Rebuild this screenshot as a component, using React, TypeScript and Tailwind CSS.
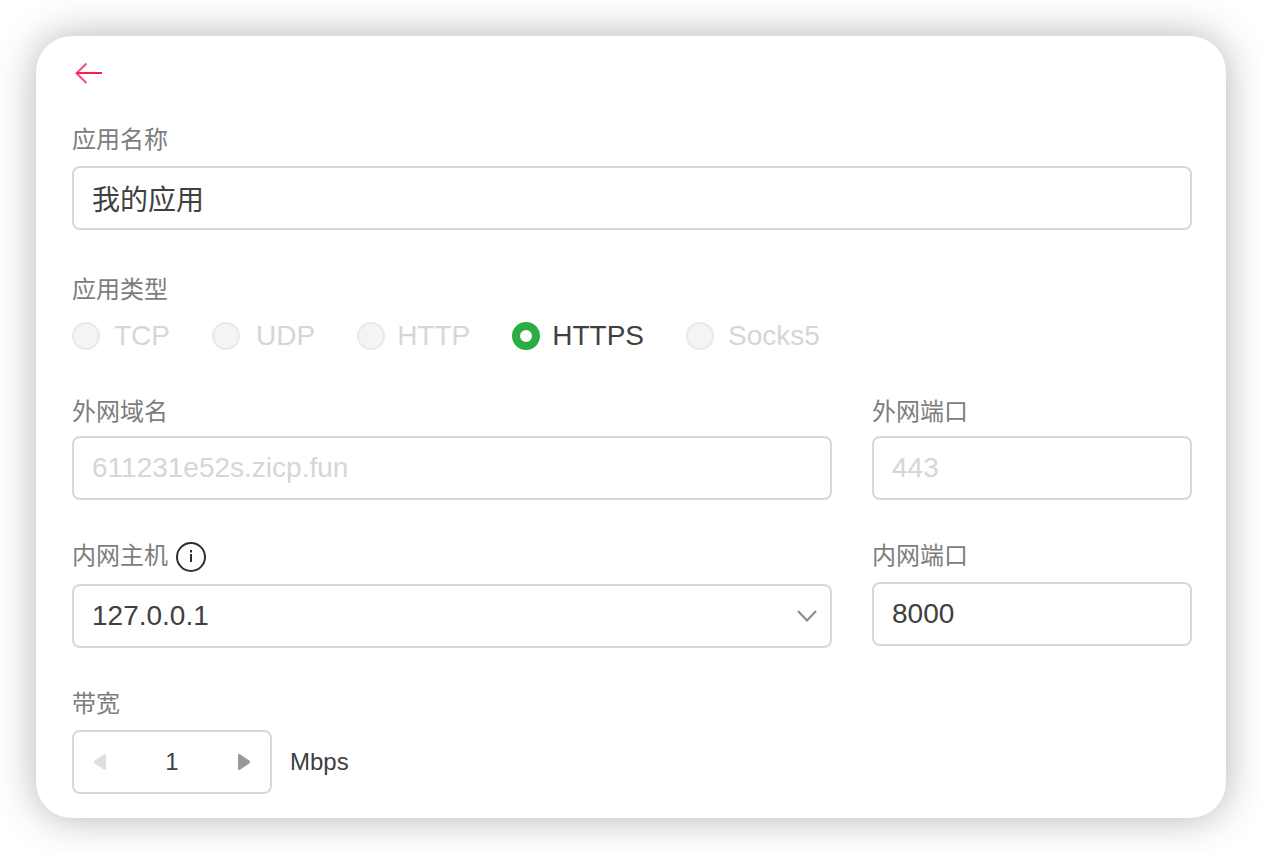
import React, { useState } from "react";
import clsx from "clsx";

const appTypes = [
  { name: "TCP", gap: "gap-3.5" },
  { name: "UDP", gap: "gap-4" },
  { name: "HTTP", gap: "gap-3" },
  { name: "HTTPS", gap: "gap-3" },
  { name: "Socks5", gap: "gap-3.5" },
];

const boxClass = "h-16 w-full rounded-lg border-2 border-[#d8d8d8] bg-white";
const inputClass = clsx(
  boxClass,
  "px-[18px] text-[28px] text-[#404040] outline-none disabled:text-[#d6d6d6]"
);
const labelClass = "block text-2xl/8 text-[#7d7d7d]";

interface FieldProps {
  id: string;
  label: string;
  value: string;
  disabled?: boolean;
  className?: string;
}

const Field = ({ id, label, value, disabled, className }: FieldProps) => {
  return (
    <div className={clsx("flex flex-col", className)}>
      <label htmlFor={id} className={labelClass}>
        {label}
      </label>
      <input
        id={id}
        type="text"
        defaultValue={value}
        disabled={disabled}
        className={inputClass}
      />
    </div>
  );
};

const BackIcon = () => (
  <svg viewBox="0 0 32 32" className="size-8" fill="none" strokeWidth="2">
    <path d="M14.5 6.5 L4.5 16.2 L14.5 26" stroke="#fb4a7c" />
    <path d="M5 16 H30" stroke="#fa1f47" />
  </svg>
);

const InfoIcon = () => (
  <svg viewBox="0 0 30 30" className="size-[30px]" fill="none">
    <circle cx="15" cy="15" r="14" stroke="#2e2e2e" strokeWidth="2" />
    <path d="M14 8h2v2.5h-2z M14 12h2v8h-2z" fill="#2e2e2e" />
  </svg>
);

const Triangle = ({ className }: { className?: string }) => (
  <svg viewBox="0 0 12 16" className={clsx("h-4 w-3", className)}>
    <path
      d="M0 1.6 C0 0 1 -0.3 2.4 0.5 L11.2 6.6 C12.3 7.4 12.3 8.6 11.2 9.4 L2.4 15.5 C1 16.3 0 16 0 14.4 Z"
      fill="currentColor"
    />
  </svg>
);

export default function App() {
  const [type, setType] = useState("HTTPS");
  const [bandwidth, setBandwidth] = useState(1);

  return (
    <main className="bg-white p-9 font-['Liberation_Sans','Noto_Sans_CJK_SC',sans-serif]">
      <form className="rounded-[36px] bg-white pt-[21px] pr-[34px] pb-6 pl-9 shadow-[0_0_40px_rgba(0,0,0,0.3)]">
        <button type="button" aria-label="返回" className="block">
          <BackIcon />
        </button>

        <Field
          id="app-name"
          label="应用名称"
          value="我的应用"
          className="mt-[35px] gap-2.5"
        />

        <fieldset className="mt-11">
          <legend className={labelClass}>应用类型</legend>
          <div className="mt-2.5 flex h-10 items-center gap-[42px]">
            {appTypes.map(({ name, gap }) => (
              <label
                key={name}
                className={clsx(
                  "flex items-center text-[28px]/10",
                  gap,
                  type === name ? "text-[#404040]" : "text-[#d6d6d6]"
                )}
              >
                <input
                  type="radio"
                  name="app-type"
                  value={name}
                  checked={type === name}
                  disabled={type !== name}
                  onChange={() => setType(name)}
                  className="size-7 appearance-none rounded-full border-2 border-[#e9e9e9] bg-[#f4f4f4] checked:border-8 checked:border-[#2dac40] checked:bg-white"
                />
                {name}
              </label>
            ))}
          </div>
        </fieldset>

        <div className="mt-10 grid grid-cols-[1fr_320px] gap-10">
          <Field
            id="domain"
            label="外网域名"
            value="611231e52s.zicp.fun"
            disabled
            className="gap-2"
          />
          <Field
            id="outer-port"
            label="外网端口"
            value="443"
            disabled
            className="gap-2"
          />
          <div className="flex flex-col gap-3">
            <div className="flex items-end gap-2">
              <label htmlFor="host" className={labelClass}>
                内网主机
              </label>
              <button type="button" aria-label="说明">
                <InfoIcon />
              </button>
            </div>
            <div className="relative">
              <select id="host" className={clsx(inputClass, "appearance-none")}>
                <option>127.0.0.1</option>
              </select>
              <svg
                viewBox="0 0 20 12"
                className="pointer-events-none absolute top-1/2 right-[15px] h-3 w-5 -translate-y-1/2"
                fill="none"
                stroke="#8e8e8e"
                strokeWidth="2.2"
              >
                <path d="M1 1 L10 10.5 L19 1" />
              </svg>
            </div>
          </div>
          <Field
            id="inner-port"
            label="内网端口"
            value="8000"
            className="gap-2.5"
          />
        </div>

        <div className="mt-10 flex flex-col gap-2.5">
          <label htmlFor="bandwidth" className={labelClass}>
            带宽
          </label>
          <div className="flex items-center gap-[18px] text-2xl text-[#404040]">
            <div className="w-[200px]">
              <div className={clsx(boxClass, "flex items-center px-5")}>
                <button
                  type="button"
                  aria-label="减少"
                  disabled={bandwidth <= 1}
                  onClick={() => setBandwidth(bandwidth - 1)}
                  className="text-[#999] disabled:text-[#dedede]"
                >
                  <Triangle className="rotate-180" />
                </button>
                <input
                  id="bandwidth"
                  type="text"
                  value={bandwidth}
                  onChange={(e) => setBandwidth(Number(e.target.value) || 1)}
                  className="w-full min-w-0 text-center outline-none"
                />
                <button
                  type="button"
                  aria-label="增加"
                  onClick={() => setBandwidth(bandwidth + 1)}
                  className="text-[#999]"
                >
                  <Triangle />
                </button>
              </div>
            </div>
            <span>Mbps</span>
          </div>
        </div>
      </form>
    </main>
  );
}
